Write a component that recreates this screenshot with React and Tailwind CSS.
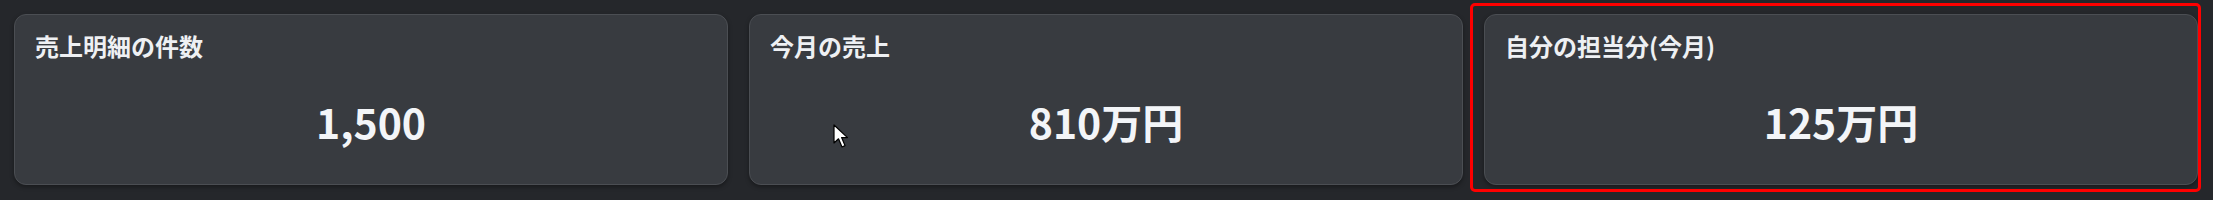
import React from 'react'

const stats = [
  { label: '売上明細の件数', value: '1,500' },
  { label: '今月の売上', value: '810万円', cursor: true },
  { label: '自分の担当分(今月)', value: '125万円', highlight: true },
]

function Cursor() {
  return (
    <svg className="absolute left-[83px] top-[109px]" width="17" height="26" viewBox="0 0 17 26">
      <path d="M1 1 L1 19 L5.5 14.8 L9 23 L12 21.6 L8.6 13.6 L14.5 13.6 Z" fill="#fff" stroke="#000" strokeWidth="1.2" strokeLinejoin="round" />
    </svg>
  )
}

function StatCard({ label, value, cursor, highlight }) {
  return (
    <div className="relative flex h-[171px] flex-col rounded-xl border border-[#4b4e53] bg-[#383b40] px-5 pt-[15px] shadow-[0_2px_4px_rgba(0,0,0,0.35)]">
      <div className="text-[24px] font-bold leading-[32px] text-[#eef0f3]">{label}</div>
      <div className="mt-[31px] text-center text-[41px] font-bold leading-[56px] text-[#f3f5f8]">{value}</div>
      {cursor && <Cursor />}
      {highlight && (
        <div className="pointer-events-none absolute -bottom-[8px] -left-[15px] -right-[4px] -top-[12px] rounded-[5px] border-[3px] border-[#ff0000]" />
      )}
    </div>
  )
}

export default function App() {
  return (
    <div className="h-[200px] w-[2213px] bg-[#25272b] pl-[14px] pr-[15px] pt-[14px]" style={{ fontFamily: '"Noto Sans CJK JP", "Noto Sans", sans-serif' }}>
      <div className="grid grid-cols-3 gap-[21px]">
        {stats.map(s => (
          <StatCard key={s.label} {...s} />
        ))}
      </div>
    </div>
  )
}
